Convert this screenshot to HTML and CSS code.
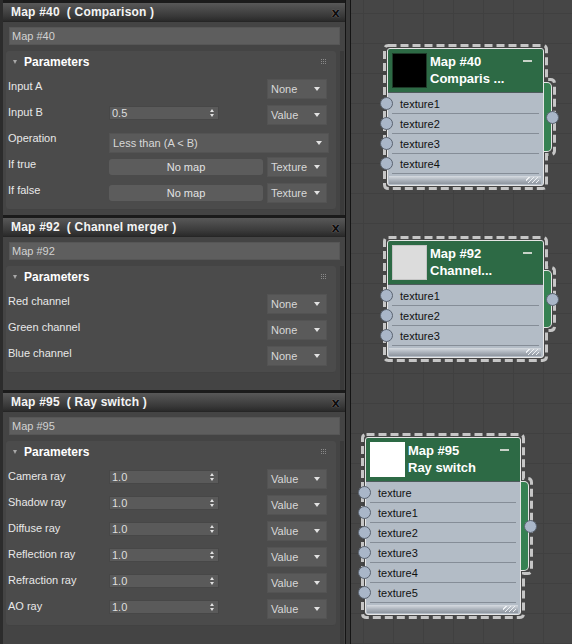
FILE: index.html
```html
<!DOCTYPE html>
<html lang="en">

<head>
  <meta charset="UTF-8">
  <title>Slate material editor</title>
  <link rel="stylesheet" href="styles.css">
</head>

<body>
  <div class="side">
    <!-- Map #40 -->
    <section class="panel panel-1">
      <div class="panel-head">
        <span>Map #40&nbsp; ( Comparison )</span>
        <span class="close">x</span>
      </div>
      <div class="name">Map #40</div>
      <div class="panel-body">
        <div class="rollout">
          <div class="roll-head"><span class="tri"></span>Parameters<span class="grip"></span></div>
          <div class="row">
            <span class="label">Input A</span>
            <span class="drop drop-sm">None</span>
          </div>
          <div class="row">
            <span class="label">Input B</span>
            <span class="spin">0.5</span>
            <span class="drop">Value</span>
          </div>
          <div class="row">
            <span class="label">Operation</span>
            <span class="drop drop-wide">Less than (A &lt; B)</span>
          </div>
          <div class="row">
            <span class="label">If true</span>
            <span class="nomap">No map</span>
            <span class="drop">Texture</span>
          </div>
          <div class="row">
            <span class="label">If false</span>
            <span class="nomap">No map</span>
            <span class="drop">Texture</span>
          </div>
        </div>
        <div class="scroll"></div>
      </div>
    </section>

    <!-- Map #92 -->
    <section class="panel panel-2">
      <div class="panel-head">
        <span>Map #92&nbsp; ( Channel merger )</span>
        <span class="close">x</span>
      </div>
      <div class="name">Map #92</div>
      <div class="panel-body">
        <div class="rollout">
          <div class="roll-head"><span class="tri"></span>Parameters<span class="grip"></span></div>
          <div class="row">
            <span class="label">Red channel</span>
            <span class="drop drop-sm">None</span>
          </div>
          <div class="row">
            <span class="label">Green channel</span>
            <span class="drop drop-sm">None</span>
          </div>
          <div class="row">
            <span class="label">Blue channel</span>
            <span class="drop drop-sm">None</span>
          </div>
        </div>
        <div class="scroll"></div>
      </div>
    </section>

    <!-- Map #95 -->
    <section class="panel panel-3">
      <div class="panel-head">
        <span>Map #95&nbsp; ( Ray switch )</span>
        <span class="close">x</span>
      </div>
      <div class="name">Map #95</div>
      <div class="panel-body">
        <div class="rollout">
          <div class="roll-head"><span class="tri"></span>Parameters<span class="grip"></span></div>
          <div class="row">
            <span class="label">Camera ray</span>
            <span class="spin">1.0</span>
            <span class="drop">Value</span>
          </div>
          <div class="row">
            <span class="label">Shadow ray</span>
            <span class="spin">1.0</span>
            <span class="drop">Value</span>
          </div>
          <div class="row">
            <span class="label">Diffuse ray</span>
            <span class="spin">1.0</span>
            <span class="drop">Value</span>
          </div>
          <div class="row">
            <span class="label">Reflection ray</span>
            <span class="spin">1.0</span>
            <span class="drop">Value</span>
          </div>
          <div class="row">
            <span class="label">Refraction ray</span>
            <span class="spin">1.0</span>
            <span class="drop">Value</span>
          </div>
          <div class="row">
            <span class="label">AO ray</span>
            <span class="spin">1.0</span>
            <span class="drop">Value</span>
          </div>
        </div>
        <div class="scroll"></div>
      </div>
    </section>
  </div>

  <div class="split"></div>

  <div class="canvas">
    <div class="node node-40">
      <svg class="frame" width="177" height="150">
        <path d="M7.5 3.5 H161.5 Q165.5 3.5 165.5 7.5 V37.5 H169.5 Q173.5 37.5 173.5 41.5 V108.5 Q173.5 112.5 169.5 112.5 H165.5 V142.5 Q165.5 146.5 161.5 146.5 H7.5 Q3.5 146.5 3.5 142.5 V7.5 Q3.5 3.5 7.5 3.5 Z" />
      </svg>
      <div class="node-body">
        <div class="node-head">
          <span class="swatch swatch-black"></span>
          <div class="node-title">Map #40<br>Comparis ...</div>
          <span class="minimize"></span>
        </div>
        <div class="slots">
          <div class="slot"><i class="pin"></i>texture1</div>
          <div class="slot"><i class="pin"></i>texture2</div>
          <div class="slot"><i class="pin"></i>texture3</div>
          <div class="slot"><i class="pin"></i>texture4</div>
        </div>
        <div class="node-foot"></div>
      </div>
      <div class="out-tab"></div>
      <i class="pin pin-out"></i>
    </div>

    <div class="node node-92">
      <svg class="frame" width="177" height="130">
        <path d="M7.5 3.5 H161.5 Q165.5 3.5 165.5 7.5 V33.5 H169.5 Q173.5 33.5 173.5 37.5 V92.5 Q173.5 96.5 169.5 96.5 H165.5 V122.5 Q165.5 126.5 161.5 126.5 H7.5 Q3.5 126.5 3.5 122.5 V7.5 Q3.5 3.5 7.5 3.5 Z" />
      </svg>
      <div class="node-body">
        <div class="node-head">
          <span class="swatch swatch-grey"></span>
          <div class="node-title">Map #92<br>Channel...</div>
          <span class="minimize"></span>
        </div>
        <div class="slots">
          <div class="slot"><i class="pin"></i>texture1</div>
          <div class="slot"><i class="pin"></i>texture2</div>
          <div class="slot"><i class="pin"></i>texture3</div>
        </div>
        <div class="node-foot"></div>
      </div>
      <div class="out-tab"></div>
      <i class="pin pin-out"></i>
    </div>

    <div class="node node-95">
      <svg class="frame" width="176" height="190">
        <path d="M7.5 3.5 H160.5 Q164.5 3.5 164.5 7.5 V47.5 H168.5 Q172.5 47.5 172.5 51.5 V138.5 Q172.5 142.5 168.5 142.5 H164.5 V182.5 Q164.5 186.5 160.5 186.5 H7.5 Q3.5 186.5 3.5 182.5 V7.5 Q3.5 3.5 7.5 3.5 Z" />
      </svg>
      <div class="node-body">
        <div class="node-head">
          <span class="swatch swatch-white"></span>
          <div class="node-title">Map #95<br>Ray switch</div>
          <span class="minimize"></span>
        </div>
        <div class="slots">
          <div class="slot"><i class="pin"></i>texture</div>
          <div class="slot"><i class="pin"></i>texture1</div>
          <div class="slot"><i class="pin"></i>texture2</div>
          <div class="slot"><i class="pin"></i>texture3</div>
          <div class="slot"><i class="pin"></i>texture4</div>
          <div class="slot"><i class="pin"></i>texture5</div>
        </div>
        <div class="node-foot"></div>
      </div>
      <div class="out-tab"></div>
      <i class="pin pin-out"></i>
    </div>
  </div>
</body>

</html>
```

FILE: styles.css
```css
body {
  margin: 0;
  width: 572px;
  height: 644px;
  overflow: hidden;
  display: flex;
  background: #464646;
  font-family: "Liberation Sans", Arial, sans-serif;
  font-size: 11px;
}

/* ---------- left column with parameter panels ---------- */

.side {
  width: 345px;
  box-sizing: border-box;
  padding-left: 3px;
  background: #2c2c2c;
  display: flex;
  flex-direction: column;
}

.split {
  width: 4px;
  border-left: 1px solid #141414;
  border-right: 1px solid #141414;
  background: #3a3a3a;
}

.panel {
  background: #444;
  border-top: 3px solid #1b1b1b;
  box-sizing: border-box;
  display: flex;
  flex-direction: column;
}

.panel-1 {
  height: 215px;
}

.panel-2 {
  height: 175px;
}

.panel-3 {
  flex: 1;
}

.panel-head {
  height: 19px;
  flex: none;
  display: flex;
  align-items: center;
  justify-content: space-between;
  padding: 0 5px 0 8px;
  background: linear-gradient(#585858, #3a3a3a 70%, #2a2a2a);
  border-bottom: 1px solid #262626;
  box-sizing: border-box;
  color: #f4f4f4;
  font-size: 12px;
  font-weight: bold;
  letter-spacing: 0.2px;
  white-space: nowrap;
}

.close {
  font-family: "DejaVu Sans", sans-serif;
  font-size: 13px;
  font-weight: bold;
  line-height: 13px;
  color: #0e0e0e;
  text-shadow: 0 0 1px #a4a4a4;
}

.name {
  flex: none;
  margin: 5px 5px 0 6px;
  height: 18px;
  box-sizing: border-box;
  padding-left: 2px;
  background: #5e5e5e;
  border: 1px solid #565656;
  color: #d2d2d2;
  line-height: 16px;
}

.panel-body {
  flex: 1;
  display: flex;
  margin-top: 6px;
}

.rollout {
  align-self: flex-start;
  margin-left: 3px;
  width: 330px;
  box-sizing: border-box;
  padding: 0 0 4px 2px;
  background: #4b4b4b;
  border-radius: 3px;
  box-shadow: inset 0 -1px 0 #424242;
}

.scroll {
  width: 4px;
  margin-left: 4px;
  background: #3a3a3a;
}

.roll-head {
  height: 25px;
  box-sizing: border-box;
  padding-bottom: 3px;
  display: flex;
  align-items: center;
  color: #fff;
  font-size: 12px;
  font-weight: bold;
}

.tri {
  width: 0;
  height: 0;
  margin: 0 7px 0 5px;
  border-left: 2.5px solid transparent;
  border-right: 2.5px solid transparent;
  border-top: 4px solid #a8a8a8;
}

.grip {
  margin-left: auto;
  margin-right: 14px;
  margin-top: -6px;
  width: 1px;
  height: 1px;
  background: #8a8a8a;
  box-shadow: 2px 0 #8a8a8a, 4px 0 #8a8a8a,
    0 2px #8a8a8a, 2px 2px #8a8a8a, 4px 2px #8a8a8a,
    0 4px #8a8a8a, 2px 4px #8a8a8a, 4px 4px #8a8a8a;
}

.row {
  display: grid;
  grid-template-columns: 97px 154px 60px;
  column-gap: 4px;
  height: 26px;
  align-items: start;
}

.label {
  line-height: 20px;
  color: #e8e8e8;
  white-space: nowrap;
}

.drop {
  position: relative;
  height: 20px;
  margin-top: 3px;
  box-sizing: border-box;
  padding-left: 3px;
  background: #5a5a5a;
  border: 1px solid #535353;
  color: #d8d8d8;
  line-height: 18px;
}

.drop::after {
  content: "";
  position: absolute;
  right: 6px;
  top: 7px;
  border-left: 3px solid transparent;
  border-right: 3px solid transparent;
  border-top: 4px solid #e2e2e2;
}

.drop-sm {
  grid-column: 3;
}

.drop-wide {
  grid-column: 2 / 4;
  width: 220px;
  margin-top: 5px;
}

.spin {
  position: relative;
  width: 110px;
  height: 14px;
  margin-top: 4px;
  box-sizing: border-box;
  padding-left: 2px;
  background: #5a5a5a;
  border: 1px solid #474747;
  color: #dedede;
  line-height: 12px;
}

.spin::before,
.spin::after {
  content: "";
  position: absolute;
  right: 4px;
  border-left: 2.5px solid transparent;
  border-right: 2.5px solid transparent;
}

.spin::before {
  top: 2px;
  border-bottom: 3px solid #e0e0e0;
}

.spin::after {
  top: 7px;
  border-top: 3px solid #e0e0e0;
}

.nomap {
  height: 16px;
  margin-top: 5px;
  background: #5c5c5c;
  border-radius: 3px;
  color: #e2e2e2;
  text-align: center;
  line-height: 16px;
}

/* ---------- node canvas ---------- */

.canvas {
  flex: 1;
  position: relative;
  background-color: #464646;
  background-image: linear-gradient(90deg, #404040 1px, transparent 1px),
    linear-gradient(#404040 1px, transparent 1px);
  background-size: 30px 30px;
  background-position: 12px 13px;
}

.node {
  position: absolute;
}

.node-40 {
  left: 36px;
  top: 48px;
  width: 157px;
}

.node-92 {
  left: 36px;
  top: 240px;
  width: 157px;
}

.node-95 {
  left: 14px;
  top: 437px;
  width: 156px;
}

.frame {
  position: absolute;
  left: -6px;
  top: -6px;
  fill: none;
  stroke: #c6c6c6;
  stroke-width: 3;
  stroke-dasharray: 8 4;
}

.node-body {
  position: relative;
  border: 1px solid #e6e6e6;
  border-radius: 3px;
  background: #b3bcc6;
}

.node-head {
  position: relative;
  display: flex;
  height: 44px;
  box-sizing: border-box;
  background: #2d6a45;
  border-bottom: 1px solid #4d5b5c;
  border-radius: 2px 2px 0 0;
}

.swatch {
  flex: none;
  width: 35px;
  height: 35px;
  margin: 4px 3px 0 4px;
  box-sizing: border-box;
}

.swatch-black {
  background: #000;
  border: 1px solid #1d3a28;
}

.swatch-grey {
  background: #dcdcdc;
  border: 1px solid #c4c4c4;
}

.swatch-white {
  background: #fff;
}

.node-title {
  padding-top: 4px;
  color: #fff;
  font-size: 13px;
  font-weight: bold;
  line-height: 17px;
  white-space: nowrap;
}

.minimize {
  position: absolute;
  right: 11px;
  top: 11px;
  width: 9px;
  height: 2px;
  background: #c8d2c8;
}

.slots {
  padding-top: 1px;
}

.slot {
  position: relative;
  height: 20px;
  padding-left: 12px;
  line-height: 20px;
  color: #111;
}

.slot::after {
  content: "";
  position: absolute;
  left: 4px;
  right: 4px;
  bottom: 0;
  height: 1px;
  background: #858d97;
}

.pin {
  position: absolute;
  left: -8px;
  top: 3px;
  width: 13px;
  height: 13px;
  box-sizing: border-box;
  border-radius: 50%;
  background: #a9b6c8;
  border: 1px solid #5a6370;
}

.node-foot {
  position: relative;
  height: 8px;
  margin: 2px 2px 1px 1px;
  background: linear-gradient(#d6dbe1, #aab1ba 55%, #8e959e);
}

.node-foot::after {
  content: "";
  position: absolute;
  right: 2px;
  top: 1px;
  width: 13px;
  height: 6px;
  background: repeating-linear-gradient(135deg, transparent 0 2px, #eef1f4 2px 3px);
}

.out-tab {
  position: absolute;
  box-sizing: border-box;
  width: 8px;
  background: #368152;
  border: 1px solid #e6e6e6;
  border-left: 0;
  border-radius: 0 5px 5px 0;
}

.node-40 .out-tab {
  left: 157px;
  top: 34px;
  height: 70px;
}

.node-92 .out-tab {
  left: 157px;
  top: 30px;
  height: 58px;
}

.node-95 .out-tab {
  left: 156px;
  top: 44px;
  height: 90px;
}

.pin-out {
  left: 159px;
}

.node-40 .pin-out {
  top: 63px;
}

.node-92 .pin-out {
  top: 53px;
}

.node-95 .pin-out {
  top: 83px;
}
```
